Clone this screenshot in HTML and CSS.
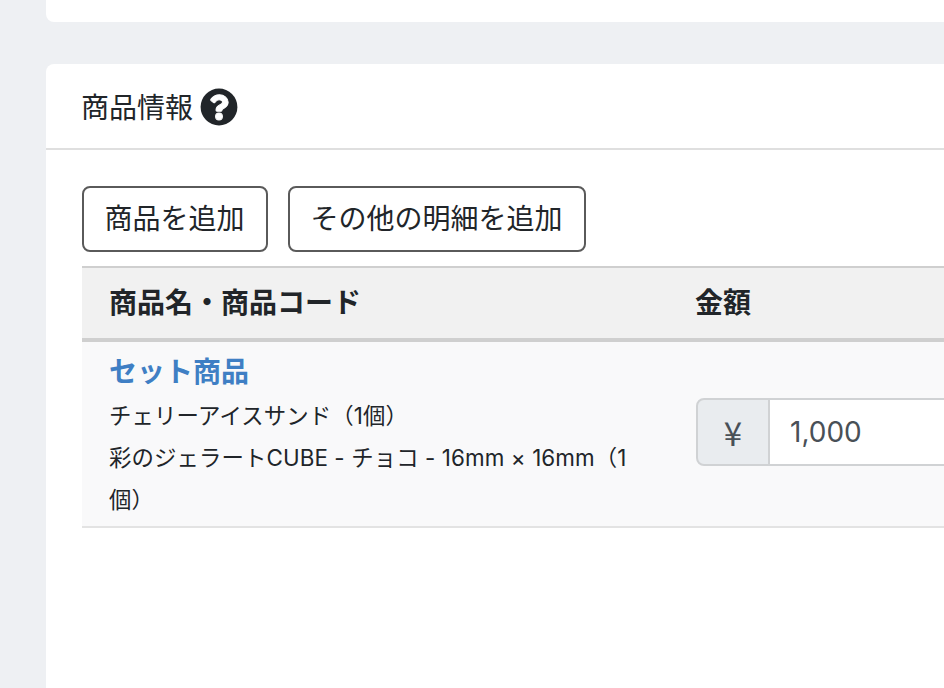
FILE: index.html
```html
<!DOCTYPE html>
<html lang="ja">
<head>
<meta charset="utf-8">
<title>商品情報</title>
<link rel="stylesheet" href="styles.css">
</head>
<body>
<main class="page">
  <section class="card card-top"></section>
  <section class="card card-main">
    <header class="card-header">
      <h2 class="card-title">商品情報</h2>
      <svg class="help" viewBox="0 0 512 512" aria-hidden="true"><circle class="help-disc" cx="256" cy="256" r="248"/><path class="help-mark" d="M262.650 90c-54.500 0-89.260 22.960-116.550 63.770-3.540 5.290-2.350 12.410 2.720 16.260l34.700 26.310c5.210 3.950 12.630 3.010 16.680-2.120 17.870-22.660 30.120-35.800 57.300-35.800 20.430 0 45.700 13.150 45.700 32.960 0 14.980-12.360 22.670-32.540 33.980C247.130 238.530 216 254.940 216 296v4c0 6.630 5.370 12 12 12h56c6.630 0 12-5.370 12-12v-1.330c0-28.460 83.190-29.650 83.190-106.670 0-58-60.160-102-116.540-102zM256 338c-25.360 0-46 20.640-46 46 0 25.360 20.640 46 46 46s46-20.640 46-46c0-25.360-20.640-46-46-46z"/></svg>
    </header>
    <div class="card-body">
      <div class="actions">
        <button class="btn" type="button">商品を追加</button>
        <button class="btn" type="button">その他の明細を追加</button>
      </div>
      <div class="table">
        <div class="table-head">
          <div class="cell">商品名・商品コード</div>
          <div class="cell">金額</div>
        </div>
        <div class="table-row">
          <div class="cell cell-name">
            <a class="product-link" href="#">セット商品</a>
            <p class="sub">チェリーアイスサンド（1個）</p>
            <p class="sub">彩のジェラートCUBE - チョコ - 16mm × 16mm（1個）</p>
          </div>
          <div class="cell cell-price">
            <div class="input-group">
              <span class="input-prefix">¥</span>
              <input class="input" type="text" value="1,000">
            </div>
          </div>
        </div>
      </div>
    </div>
  </section>
</main>
</body>
</html>
```
FILE: styles.css
```css
* { box-sizing: border-box; }
html, body { margin: 0; height: 100%; overflow: hidden; }
body {
  background: #eef0f3;
  color: #212529;
  font-family: Inter, "Noto Sans CJK JP", sans-serif;
  font-size: 28px;
}
.page { width: 944px; height: 688px; padding-left: 46px; overflow: hidden; }
.card { width: 1354px; background: #fff; border-radius: 8px; }
.card-top { height: 22px; margin-bottom: 42px; border-radius: 0 0 8px 8px; }
.card-main { height: 700px; }
.card-header {
  height: 86px;
  padding: 0 35px;
  display: flex;
  align-items: center;
  gap: 7px;
  border-bottom: 2px solid #dfdfdf;
}
.card-title { margin: 4px 0 0; font-size: 28px; font-weight: 400; line-height: 42px; }
.help { width: 38px; height: 38px; margin-top: 1px; }
.help-disc { fill: #212529; }
.help-mark { fill: #fff; stroke: #fff; stroke-width: 14; stroke-linejoin: round; }
.card-body { padding: 36px; }
.actions { display: flex; gap: 20px; margin-bottom: 14px; }
.btn {
  height: 66px;
  padding: 0 21.5px 0 20.5px;
  background: #fff;
  border: 2px solid #5a5a5a;
  border-radius: 8px;
  color: #212529;
  font: inherit;
  line-height: 42px;
}
.table { border-top: 2px solid #cfcfcf; }
.table-head, .table-row { display: grid; grid-template-columns: 586px 1fr; }
.table-head {
  height: 74px;
  align-items: center;
  background: #f1f1f1;
  border-bottom: 4px solid #cfcfcf;
  font-weight: 700;
}
.table-row {
  height: 186px;
  align-items: center;
  background: #f9f9fa;
  border-bottom: 2px solid #e3e3e3;
}
.cell { padding: 0 28px 4px 27px; }
.cell-name { padding: 3px 36px 0 27px; }
.cell-price { padding: 0 28px 4px 28px; }
.product-link {
  display: block;
  margin-bottom: 2px;
  color: #3f7fc4;
  font-weight: 700;
  line-height: 42px;
  text-decoration: none;
}
.sub { margin: 0; font-size: 22.4px; line-height: 42px; letter-spacing: 0.1px; }
.input-group { display: flex; width: 600px; height: 68px; }
.input-prefix {
  width: 74px;
  display: flex;
  align-items: center;
  justify-content: center;
  background: #e9ecef;
  border: 2px solid #d0d2d4;
  border-radius: 8px 0 0 8px;
  color: #495057;
  font-family: "Noto Sans CJK JP", sans-serif;
  font-size: 33px;
  line-height: 1;
}
.input {
  flex: 1;
  min-width: 0;
  padding: 0 20px;
  background: #fff;
  border: 2px solid #d0d2d4;
  border-left: 0;
  border-radius: 0 8px 8px 0;
  color: #495057;
  font: inherit;
}
```
